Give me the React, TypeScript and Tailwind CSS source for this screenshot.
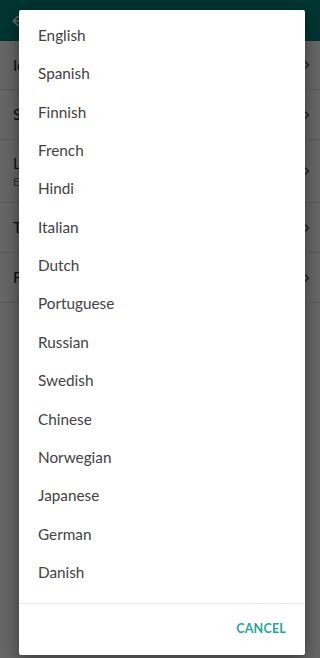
import { ArrowLeft, ChevronRight } from "lucide-react";

const LANGUAGES = [
  "English",
  "Spanish",
  "Finnish",
  "French",
  "Hindi",
  "Italian",
  "Dutch",
  "Portuguese",
  "Russian",
  "Swedish",
  "Chinese",
  "Norwegian",
  "Japanese",
  "German",
  "Danish",
];

const ROWS = [
  { title: "Icon", sub: "", h: "h-[49px]" },
  { title: "Sound", sub: "", h: "h-[50px]" },
  { title: "Language", sub: "English", h: "h-[63px]" },
  { title: "Theme", sub: "", h: "h-[50px]" },
  { title: "Feedback", sub: "", h: "h-[50px]" },
];

export default function App() {
  return (
    <div
      className="relative w-[320px] h-[658px] overflow-hidden bg-white"
      style={{ fontFamily: "Lato, 'Open Sans', sans-serif" }}
    >
      {/* settings page underneath */}
      <div className="h-[41px] bg-[#00867a] flex items-center px-[10px]">
        <ArrowLeft className="w-[16px] h-[16px] text-white" strokeWidth={2.5} />
        <span className="ml-6 text-white text-[17px]">Settings</span>
      </div>
      <div>
        {ROWS.map((r) => (
          <div
            key={r.title}
            className={`${r.h} flex items-center justify-between pl-[13px] pr-[7px] border-b border-[#e2e2e2]`}
          >
            <div className="flex flex-col">
              <span className="text-[15px] text-[#222]">{r.title}</span>
              {r.sub && <span className="text-[11px] text-[#777]">{r.sub}</span>}
            </div>
            <ChevronRight className="w-[12px] h-[12px] text-[#555]" strokeWidth={3} />
          </div>
        ))}
      </div>

      {/* scrim */}
      <div className="absolute inset-0 bg-black/60" />

      {/* language dialog */}
      <div className="absolute left-[19px] top-[10px] w-[286px] h-[645px] bg-white rounded-[2px] shadow-[0_4px_16px_rgba(0,0,0,0.45)] flex flex-col">
        <div className="pt-[6px] pb-[11px]">
          {LANGUAGES.map((lang) => (
            <div
              key={lang}
              className="h-[38.4px] flex items-center pl-[19px] text-[15.3px] text-[#424242]"
            >
              {lang}
            </div>
          ))}
        </div>
        <div className="h-[1px] bg-[#e8e8e8]" />
        <div className="flex-1 flex items-center justify-end pr-[19px]">
          <span className="text-[12.5px] font-bold text-[#26a69a] tracking-[0.2px]">CANCEL</span>
        </div>
      </div>
    </div>
  );
}
